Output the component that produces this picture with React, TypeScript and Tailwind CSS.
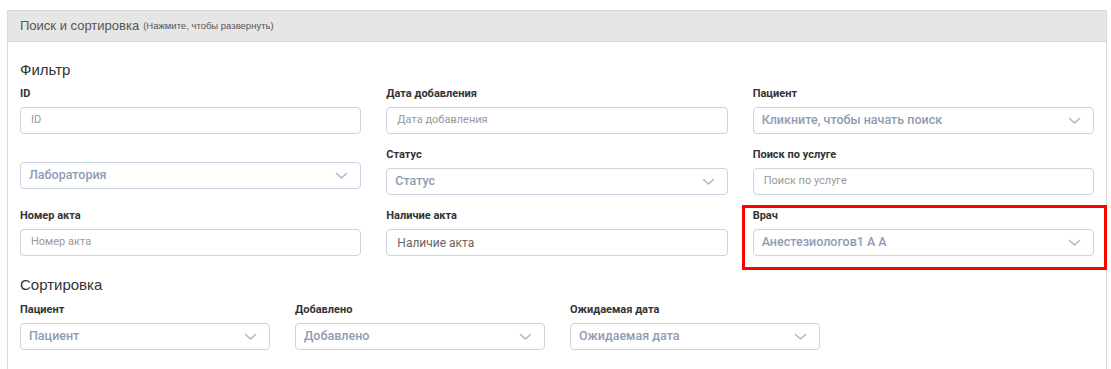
import React from 'react';

const Chevron = () => (
  <svg width="13" height="8" viewBox="0 0 13 8" fill="none" className="shrink-0">
    <path d="M1.5 1.5L6.5 6L11.5 1.5" stroke="#aab6c7" strokeWidth="1.5" strokeLinecap="round" strokeLinejoin="round" />
  </svg>
);

const Label = ({ children }: { children?: React.ReactNode }) => (
  <div className="h-[20px] text-[11px] font-bold leading-[14px] text-[#333]">{children}</div>
);

const TextInput = ({ placeholder, dark }: { placeholder: string; dark?: boolean }) => (
  <div className="flex h-[27px] items-center rounded-[4px] border border-[#c9d3e1] bg-white px-[10px]">
    <span className={dark ? 'text-[12px] text-[#666]' : 'text-[11px] text-[#999]'}>{placeholder}</span>
  </div>
);

const Select = ({ placeholder }: { placeholder: string }) => (
  <div className="flex h-[27px] items-center justify-between rounded-[4px] border border-[#c9d3e1] bg-white pl-[8px] pr-[12px]">
    <span className="text-[12.5px] font-medium text-[#8e9cb4]">{placeholder}</span>
    <Chevron />
  </div>
);

const Field = ({ label, children }: { label?: string; children: React.ReactNode }) => (
  <div>
    <Label>{label}</Label>
    {children}
  </div>
);

export default function App() {
  return (
    <div className="min-h-[369px] bg-white pt-[10px] font-['Liberation_Sans',Arial,sans-serif]">
      <div className="ml-[7px] w-[1100px] border border-[#d9d9d9] bg-white">
        <div className="flex h-[31px] items-center border-b border-[#d4d4d4] bg-[#e6e6e6] px-[12px] text-[#555]">
          <span className="text-[13px]">Поиск и сортировка</span>
          <span className="ml-[4px] text-[9.5px]">(Нажмите, чтобы развернуть)</span>
        </div>

        <div className="px-[12px] pb-[20px] pt-[19px]">
          <div className="mb-[8px] text-[15px] leading-[18px] text-[#333]">Фильтр</div>

          <div className="grid grid-cols-3 gap-x-[25px] gap-y-[14px] font-['Roboto',sans-serif]">
            <Field label="ID">
              <TextInput placeholder="ID" />
            </Field>
            <Field label="Дата добавления">
              <TextInput placeholder="Дата добавления" />
            </Field>
            <Field label="Пациент">
              <Select placeholder="Кликните, чтобы начать поиск" />
            </Field>

            <div className="pt-[14px]">
              <Select placeholder="Лаборатория" />
            </div>
            <Field label="Статус">
              <Select placeholder="Статус" />
            </Field>
            <Field label="Поиск по услуге">
              <TextInput placeholder="Поиск по услуге" />
            </Field>

            <Field label="Номер акта">
              <TextInput placeholder="Номер акта" />
            </Field>
            <Field label="Наличие акта">
              <TextInput placeholder="Наличие акта" dark />
            </Field>
            <div className="relative">
              <Label>Врач</Label>
              <Select placeholder="Анестезиологов1 А А" />
              <div className="pointer-events-none absolute -bottom-[14px] -left-[11px] -right-[13px] -top-[4px] border-[3px] border-[#ff0000]" />
            </div>
          </div>

          <div className="mb-[9px] mt-[20px] text-[15px] leading-[18px] text-[#333]">Сортировка</div>

          <div className="grid grid-cols-[250px_250px_250px] gap-x-[25px] font-['Roboto',sans-serif]">
            <Field label="Пациент">
              <Select placeholder="Пациент" />
            </Field>
            <Field label="Добавлено">
              <Select placeholder="Добавлено" />
            </Field>
            <Field label="Ожидаемая дата">
              <Select placeholder="Ожидаемая дата" />
            </Field>
          </div>
        </div>
      </div>
    </div>
  );
}
